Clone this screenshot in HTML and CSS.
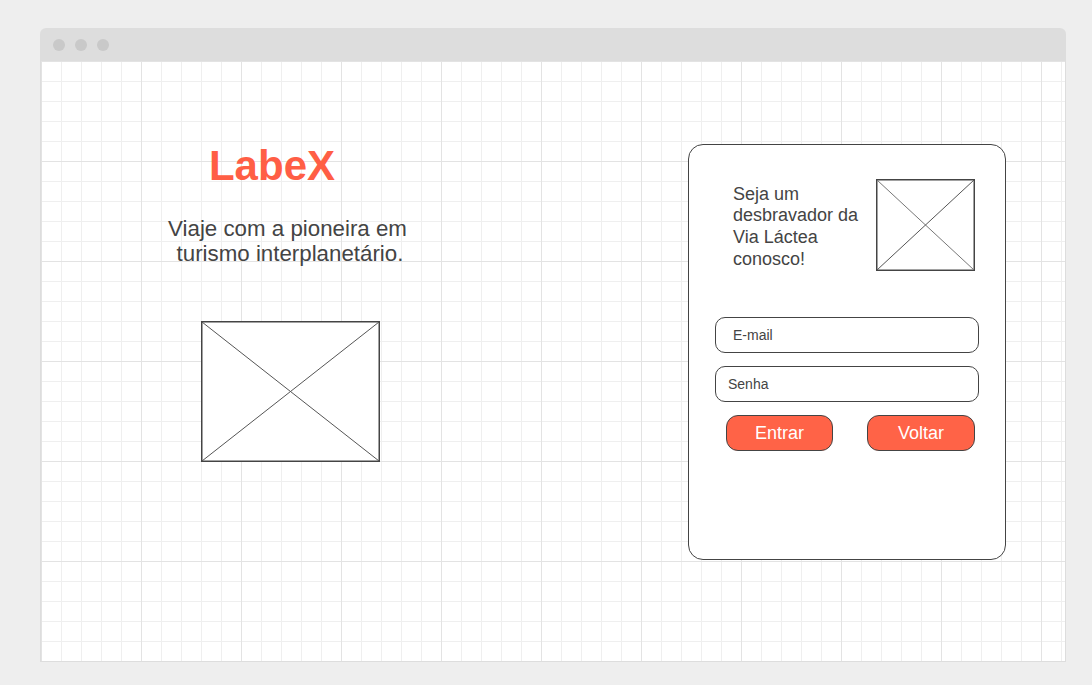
FILE: index.html
```html
<!DOCTYPE html>
<html lang="pt-BR">
<head>
<meta charset="utf-8">
<title>LabeX</title>
<link rel="stylesheet" href="styles.css">
</head>
<body>
<div class="window">
  <div class="titlebar">
    <span class="dot"></span><span class="dot"></span><span class="dot"></span>
  </div>
  <div class="canvas">
    <section class="intro">
      <h1 class="brand">LabeX</h1>
      <p class="tagline"><span class="line-one">Viaje com a pioneira em</span><br>turismo interplanetário.</p>
      <svg class="ph-large" width="179" height="141" viewBox="0 0 179 141">
        <rect x="0.75" y="0.75" width="177.5" height="139.5" fill="#fff" stroke="#444" stroke-width="1.5"/>
        <line x1="1" y1="1" x2="178" y2="140" stroke="#555" stroke-width="1"/>
        <line x1="178" y1="1" x2="1" y2="140" stroke="#555" stroke-width="1"/>
      </svg>
    </section>
    <section class="card">
      <div class="card-top">
        <p class="card-text">Seja um desbravador da Via Láctea conosco!</p>
        <svg class="ph-small" width="99" height="92" viewBox="0 0 99 92">
          <rect x="0.75" y="0.75" width="97.5" height="90.5" fill="#fff" stroke="#444" stroke-width="1.5"/>
          <line x1="1" y1="1" x2="98" y2="91" stroke="#777" stroke-width="1"/>
          <line x1="98" y1="1" x2="1" y2="91" stroke="#555" stroke-width="1"/>
        </svg>
      </div>
      <div class="field field-email">E-mail</div>
      <div class="field field-pass">Senha</div>
      <div class="actions">
        <div class="btn btn-enter">Entrar</div>
        <div class="btn btn-back">Voltar</div>
      </div>
    </section>
  </div>
</div>
</body>
</html>
```

FILE: styles.css
```css
* { box-sizing: border-box; }

html, body {
  margin: 0;
  padding: 0;
  background: #eeeeee;
  font-family: "Liberation Sans", Arial, sans-serif;
}

body {
  padding: 28px 0 0 40px;
  height: 685px;
  overflow: hidden;
}

.window {
  width: 1026px;
  background: #dddddd;
  border-radius: 6px 6px 0 0;
  padding: 0 1px 1px 1px;
}

.titlebar {
  height: 33px;
  display: flex;
  align-items: center;
  gap: 10px;
  padding-left: 12px;
}

.dot {
  width: 12px;
  height: 12px;
  border-radius: 50%;
  background: #c9c9c9;
}

.canvas {
  width: 1024px;
  height: 600px;
  background-color: #ffffff;
  background-image:
    linear-gradient(to right, #e3e3e3 1px, transparent 1px),
    linear-gradient(to bottom, #e3e3e3 1px, transparent 1px),
    linear-gradient(to right, #efefef 1px, transparent 1px),
    linear-gradient(to bottom, #efefef 1px, transparent 1px);
  background-size: 100px 100px, 100px 100px, 20px 20px, 20px 20px;
  display: flex;
  align-items: flex-start;
  padding-top: 81px;
}

.intro {
  width: 400px;
  margin-left: 49px;
  display: flex;
  flex-direction: column;
  align-items: center;
}

.brand {
  margin: 0 36px 0 0;
  font-size: 42px;
  line-height: 48px;
  font-weight: bold;
  color: #ff5e45;
}

.tagline {
  margin: 26px 0 0 0;
  font-size: 22.3px;
  line-height: 25px;
  color: #444444;
  text-align: center;
}

.line-one {
  margin-right: 5px;
}

.ph-large {
  display: block;
  margin-top: 55px;
}

.card {
  margin-left: 198px;
  margin-top: 2px;
  width: 318px;
  height: 416px;
  border: 1px solid #444444;
  border-radius: 15px;
  background: #ffffff;
}

.card-top {
  display: flex;
  align-items: center;
  margin-top: 34px;
  padding-left: 44px;
}

.card-text {
  margin: 4px 8px 0 0;
  width: 135px;
  font-size: 18px;
  line-height: 21.6px;
  color: #444444;
}

.ph-small {
  display: block;
}

.field {
  margin-left: 26px;
  width: 264px;
  height: 36px;
  border: 1px solid #444444;
  border-radius: 10px;
  display: flex;
  align-items: center;
  font-size: 14px;
  color: #444444;
}

.field-email {
  margin-top: 46px;
  padding-left: 17px;
}

.field-pass {
  margin-top: 13px;
  padding-left: 12px;
}

.actions {
  margin: 13px 0 0 37px;
  width: 249px;
  display: flex;
  justify-content: space-between;
}

.btn {
  height: 36px;
  border: 1px solid #444444;
  border-radius: 12px;
  background: #ff6347;
  color: #ffffff;
  font-size: 18px;
  padding-top: 1px;
  display: flex;
  align-items: center;
  justify-content: center;
}

.btn-enter { width: 107px; }
.btn-back { width: 108px; }
```
